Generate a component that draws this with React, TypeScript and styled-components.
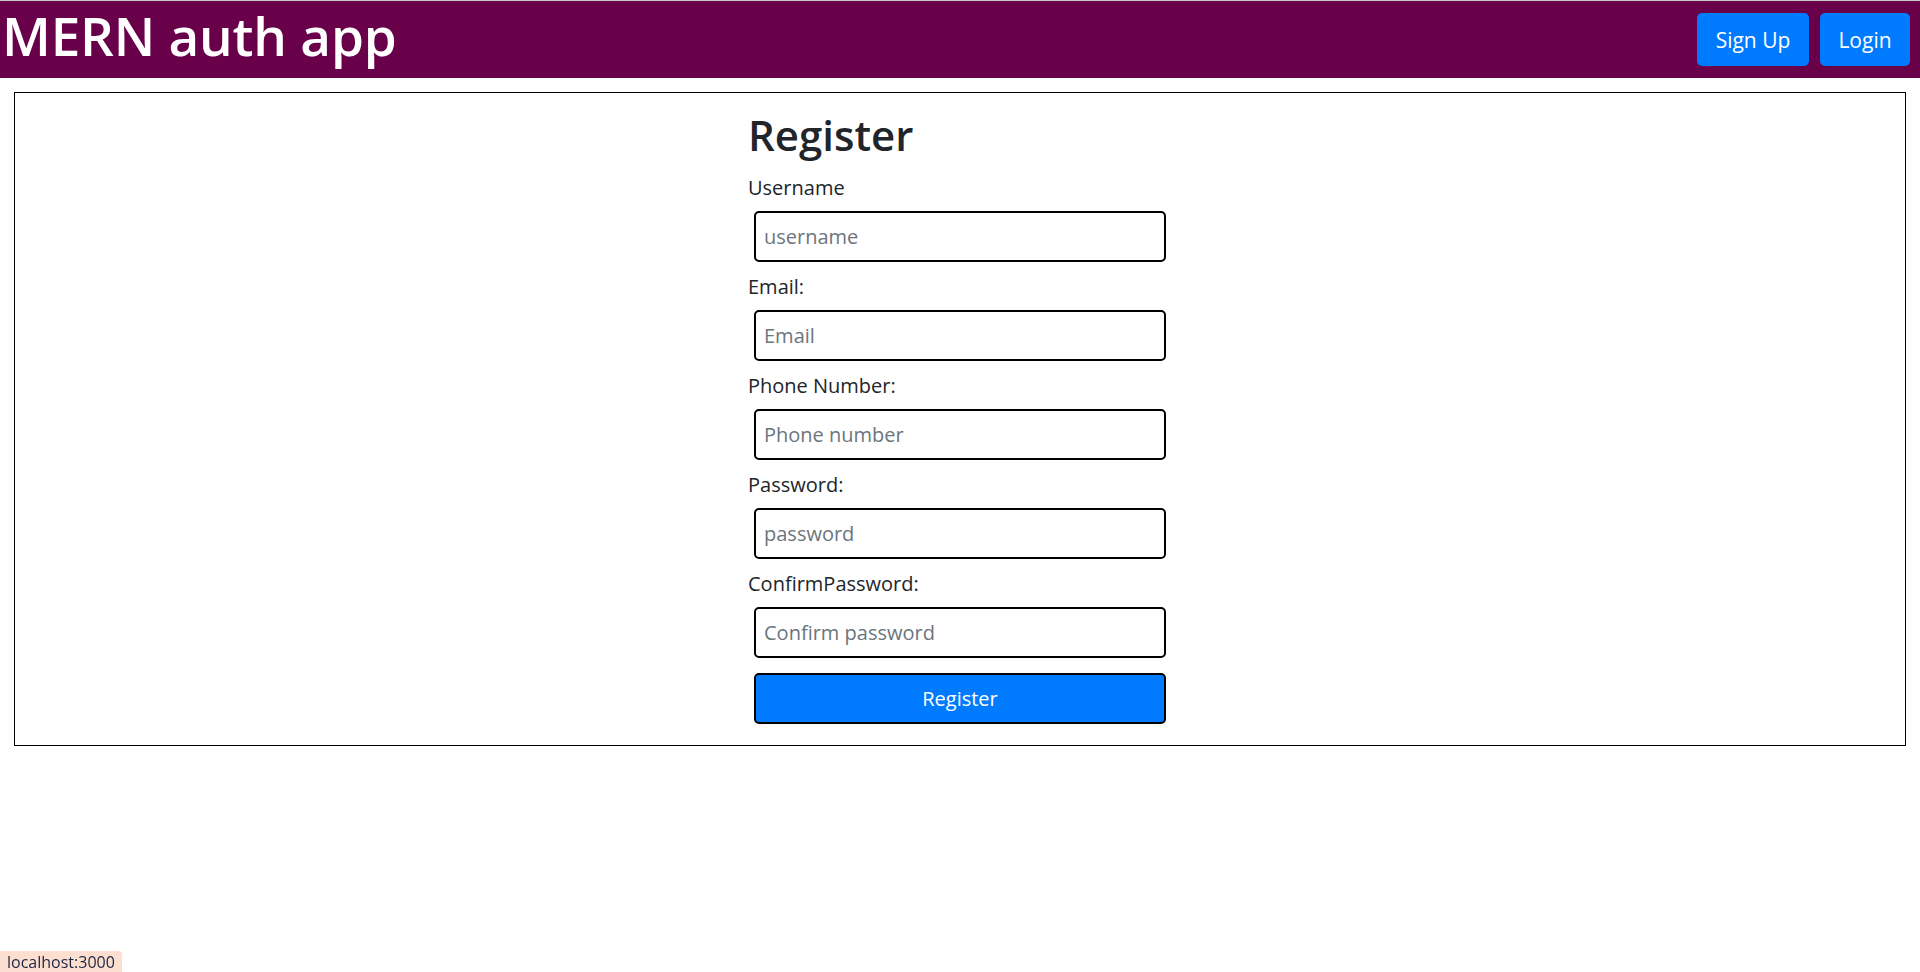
import styled, { createGlobalStyle } from 'styled-components'

const GlobalStyle = createGlobalStyle`
    body {
        margin: 0;
        font-family: 'Open Sans', 'Noto Sans', sans-serif;
        color: #212529;
        background: #fff;
    }
    * {
        box-sizing: border-box;
    }
`

const SHeader = styled.header`
    height: 78px;
    border-top: 1px solid #c9c9c9;
    background-color: #68004a;
    display: flex;
    align-items: center;
    justify-content: space-between;
    padding: 0 10px 0 2px;
`

const SH1_Brand = styled.h1`
    margin: 0 0 8px;
    color: #fff;
    font-size: 53px;
    font-weight: 600;
    line-height: 1;
    letter-spacing: -0.2px;
`

const SDiv_Nav = styled.nav`
    display: flex;
    gap: 11px;
`

const SButton_Nav = styled.button<{ $w: number }>`
    width: ${(p) => p.$w}px;
    height: 53px;
    border: none;
    border-radius: 5px;
    background-color: #007bff;
    color: #fff;
    font-family: inherit;
    font-size: 21px;
    cursor: pointer;
`

const SMain_Box = styled.main`
    margin: 14px;
    border: 1px solid #000;
    padding: 15px 0 21px;
    display: flex;
    justify-content: center;
`

const SForm = styled.form`
    width: 424px;
    display: flex;
    flex-direction: column;
`

const SH2_Title = styled.h2`
    margin: 0 0 12px;
    font-size: 42px;
    font-weight: 600;
    line-height: 53px;
`

const SLabel = styled.label`
    display: block;
    font-size: 20px;
    line-height: 30px;
    margin-bottom: 8px;
`

const SInput = styled.input`
    display: block;
    width: 412px;
    height: 51px;
    margin: 0 6px 10px;
    padding: 0 8px;
    border: 2px solid #000;
    border-radius: 5px;
    font-family: inherit;
    font-size: 20px;
    color: #212529;

    &::placeholder {
        color: #6c757d;
    }
`

const SButton_Submit = styled.button`
    width: 412px;
    height: 51px;
    margin: 5px 6px 0;
    border: 2px solid #000;
    border-radius: 5px;
    background-color: #007bff;
    color: #fff;
    font-family: inherit;
    font-size: 20px;
    cursor: pointer;
`

const SDiv_Status = styled.div`
    position: fixed;
    left: 0;
    bottom: 0;
    height: 21px;
    padding: 0 7px;
    background-color: #fcdfd0;
    border-top-right-radius: 4px;
    font-size: 16px;
    line-height: 23px;
    color: #1c2541;
`

const fields = [
    { label: 'Username', placeholder: 'username', type: 'text' },
    { label: 'Email:', placeholder: 'Email', type: 'email' },
    { label: 'Phone Number:', placeholder: 'Phone number', type: 'text' },
    { label: 'Password:', placeholder: 'password', type: 'password' },
    { label: 'ConfirmPassword:', placeholder: 'Confirm password', type: 'password' },
]

export default function App() {
    return (
        <>
            <GlobalStyle />
            <SHeader>
                <SH1_Brand>MERN auth app</SH1_Brand>
                <SDiv_Nav>
                    <SButton_Nav $w={112}>Sign Up</SButton_Nav>
                    <SButton_Nav $w={90}>Login</SButton_Nav>
                </SDiv_Nav>
            </SHeader>
            <SMain_Box>
                <SForm onSubmit={(e) => e.preventDefault()}>
                    <SH2_Title>Register</SH2_Title>
                    {fields.map((f) => (
                        <div key={f.label}>
                            <SLabel>{f.label}</SLabel>
                            <SInput type={f.type} placeholder={f.placeholder} />
                        </div>
                    ))}
                    <SButton_Submit type='submit'>Register</SButton_Submit>
                </SForm>
            </SMain_Box>
            <SDiv_Status>localhost:3000</SDiv_Status>
        </>
    )
}
